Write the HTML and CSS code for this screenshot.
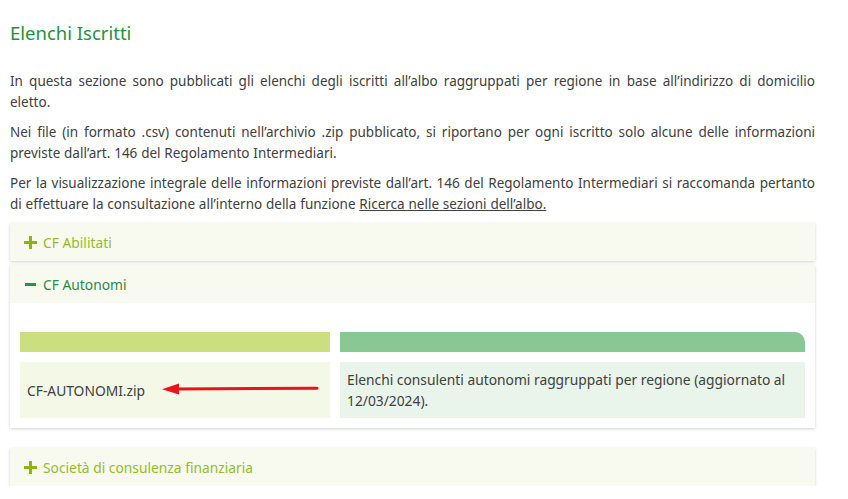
FILE: index.html
```html
<!DOCTYPE html>
<html lang="it">
<head>
<meta charset="utf-8">
<title>Elenchi Iscritti</title>
<link rel="stylesheet" href="styles.css">
</head>
<body>
<div class="page">
  <h1 class="title">Elenchi Iscritti</h1>
  <p class="para">In questa sezione sono pubblicati gli elenchi degli iscritti all’albo raggruppati per regione in base all’indirizzo di domicilio eletto.</p>
  <p class="para">Nei file (in formato .csv) contenuti nell’archivio .zip pubblicato, si riportano per ogni iscritto solo alcune delle informazioni previste dall’art. 146 del Regolamento Intermediari.</p>
  <p class="para">Per la visualizzazione integrale delle informazioni previste dall’art. 146 del Regolamento Intermediari si raccomanda pertanto di effettuare la consultazione all’interno della funzione <a class="link" href="#">Ricerca nelle sezioni dell’albo.</a></p>

  <div class="accordion">
    <div class="panel">
      <div class="panel-head closed">
        <svg class="icon" width="13" height="13" viewBox="0 0 13 13"><rect x="5" y="0" width="3" height="13" fill="#8cb413"/><rect x="0" y="5" width="13" height="3" fill="#8cb413"/></svg>
        <span>CF Abilitati</span>
      </div>
    </div>

    <div class="panel">
      <div class="panel-head open">
        <svg class="icon" width="13" height="13" viewBox="0 0 13 13"><rect x="1" y="5" width="11" height="3" fill="#1f9a3c"/></svg>
        <span>CF Autonomi</span>
      </div>
      <div class="panel-body">
        <div class="table">
          <div class="th th-left"></div>
          <div class="th th-right"></div>
          <div class="td td-left">
            <span>CF-AUTONOMI.zip</span>
            <svg class="arrow" width="160" height="14" viewBox="0 0 160 14"><line x1="14" y1="7" x2="155" y2="6.2" stroke="#e8141a" stroke-width="3" stroke-linecap="round"/><polygon points="0,7.2 17,1.5 17,12.5" fill="#e8141a"/></svg>
          </div>
          <div class="td td-right">Elenchi consulenti autonomi raggruppati per regione (aggiornato al 12/03/2024).</div>
        </div>
      </div>
    </div>

    <div class="panel panel-last">
      <div class="panel-head closed">
        <svg class="icon" width="13" height="13" viewBox="0 0 13 13"><rect x="5" y="0" width="3" height="13" fill="#8cb413"/><rect x="0" y="5" width="13" height="3" fill="#8cb413"/></svg>
        <span>Società di consulenza finanziaria</span>
      </div>
    </div>
  </div>
</div>
</body>
</html>
```

FILE: styles.css
```css
* { box-sizing: border-box; }

body {
  margin: 0;
  background: #ffffff;
  font-family: "Noto Sans", "Liberation Sans", sans-serif;
  color: #404040;
}

.page {
  padding: 20px 33px 0 10px;
}

.title {
  margin: 0;
  font-size: 18.5px;
  line-height: 26px;
  font-weight: 400;
  color: #21923a;
}

.para {
  margin: 9px 0 0;
  font-size: 13.5px;
  word-spacing: 0.3px;
  line-height: 21px;
  text-align: justify;
}

.title + .para { margin-top: 25px; }

.link {
  color: #404040;
  text-decoration: underline;
}

.accordion {
  margin-top: 8px;
  display: flex;
  flex-direction: column;
  gap: 4px;
}

.panel {
  background: #ffffff;
  box-shadow: 0 1px 3px rgba(0, 0, 0, 0.18);
}

.panel-last { margin-top: 16px; }

.panel-head {
  height: 38px;
  display: flex;
  align-items: center;
  gap: 6px;
  padding-left: 14px;
  background: #f9faef;
  font-size: 13.8px;
}

.panel-head.closed { color: #96bc2a; }
.panel-head.open { color: #2a8a4c; }

.icon { flex: none; }

.panel-body {
  padding: 29px 10px 10px;
}

.table {
  display: grid;
  grid-template-columns: 310px 465px;
  grid-template-rows: 20px 56px;
  gap: 10px;
}

.th-left { background: #cbdf80; }
.th-right { background: #89c795; border-top-right-radius: 10px; }

.td {
  display: flex;
  align-items: center;
  padding: 0 7px;
  font-size: 13.8px;
  line-height: 21px;
  color: #404040;
}

.td-left {
  position: relative;
  background: #f4f8e6;
}

.td-right { background: #e9f4eb; }

.arrow {
  position: absolute;
  left: 142px;
  top: 20px;
}
```
